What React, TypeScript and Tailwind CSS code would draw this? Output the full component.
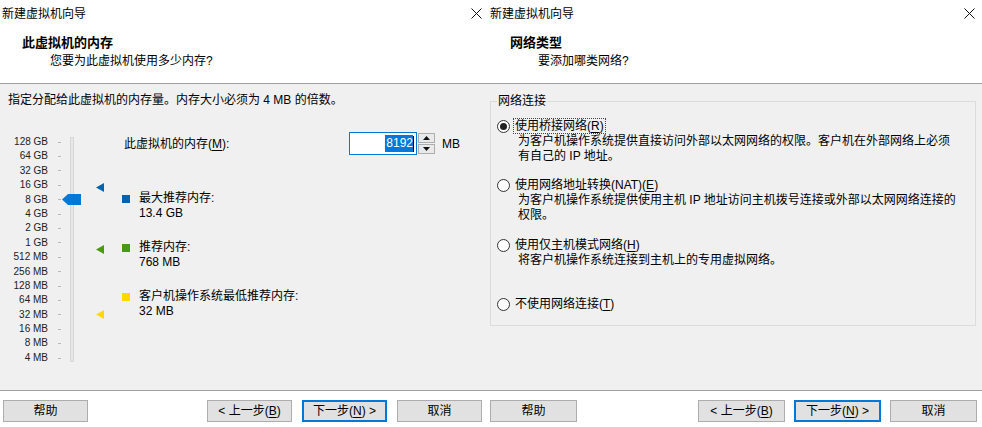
import React from 'react';

// slider stops, top to bottom
const STOPS = [
  '128 GB', '64 GB', '32 GB', '16 GB', '8 GB', '4 GB', '2 GB', '1 GB',
  '512 MB', '256 MB', '128 MB', '64 MB', '32 MB', '16 MB', '8 MB', '4 MB',
];

function Key({ c }: { c: string }) {
  return <span className="underline underline-offset-[2px]">{c}</span>;
}

function CloseIcon() {
  return (
    <svg width="11" height="11" viewBox="0 0 11 11">
      <path d="M0.5 0.5 L10.5 10.5 M10.5 0.5 L0.5 10.5" stroke="#111" strokeWidth="1" />
    </svg>
  );
}

function TitleBar({ pl, pr }: { pl: string; pr: string }) {
  return (
    <div className={`h-[27px] flex items-center justify-between bg-white ${pl} ${pr}`}>
      <span className="leading-4">新建虚拟机向导</span>
      <CloseIcon />
    </div>
  );
}

function Header({ title, sub, pl }: { title: string; sub: string; pl: string }) {
  return (
    <div className={`h-[57px] bg-white pt-[7px] border-b border-[#a0a0a0] ${pl}`}>
      <div className="text-[13px] font-bold leading-[18px]">{title}</div>
      <div className="mt-[1px] pl-[28px] leading-4">{sub}</div>
    </div>
  );
}

function Button({
  children,
  primary,
  w,
}: {
  children: React.ReactNode;
  primary?: boolean;
  w: string;
}) {
  return (
    <button
      className={`h-[22px] ${w} flex items-center justify-center bg-[#e1e1e1] leading-4 ${
        primary ? 'border-2 border-[#0078d7]' : 'border border-[#adadad]'
      }`}
    >
      {children}
    </button>
  );
}

function Footer({ w, gap, pt }: { w: string; gap: string; pt: string }) {
  return (
    <div className={`h-[37px] border-t border-[#a0a0a0] flex items-start pl-[3px] pr-[5px] ${pt}`}>
      <Button w={w}>帮助</Button>
      <div className="flex-1" />
      <div className={`flex ${gap}`}>
        <Button w={w}>
          &lt; 上一步(<Key c="B" />)
        </Button>
        <Button w={w} primary>
          下一步(<Key c="N" />) &gt;
        </Button>
        <Button w={w}>取消</Button>
      </div>
    </div>
  );
}

function Triangle({ color }: { color: string }) {
  return (
    <svg width="8" height="9" viewBox="0 0 8 9">
      <polygon points="0,4.5 8,0 8,9" fill={color} />
    </svg>
  );
}

function Legend({ color, label, value, mt }: { color: string; label: string; value: string; mt: string }) {
  return (
    <div className={`flex gap-[9px] ${mt}`}>
      <div className="w-[8px] h-[8px] mt-[3.5px]" style={{ background: color }} />
      <div className="leading-[15px]">
        <div>{label}</div>
        <div>{value}</div>
      </div>
    </div>
  );
}

function SpinButton({ up }: { up?: boolean }) {
  return (
    <div className="h-[10px] border border-[#adadad] bg-[#e9e9e9] flex items-center justify-center">
      <svg width="7" height="4" viewBox="0 0 7 4">
        <polygon points={up ? '0,4 3.5,0 7,4' : '0,0 3.5,4 7,0'} fill="#111" />
      </svg>
    </div>
  );
}

function MemoryPage() {
  return (
    <div className="w-[487px] h-[427px] flex flex-col">
      <TitleBar pl="pl-[2px]" pr="pr-[5px]" />
      <Header title="此虚拟机的内存" sub="您要为此虚拟机使用多少内存?" pl="pl-[22px]" />
      <div className="flex-1 bg-[#f0f0f0] pl-[8px] pt-[8px]">
        <p className="leading-4">指定分配给此虚拟机的内存量。内存大小必须为 4 MB 的倍数。</p>
        <div className="flex mt-[24px]">
          {/* scale labels */}
          <div className="w-[40px] pt-[3px] text-right text-[10px] text-[#222]">
            {STOPS.map((s) => (
              <div key={s} className="h-[14.4px] leading-[14.4px] whitespace-nowrap">
                {s}
              </div>
            ))}
          </div>
          {/* ticks */}
          <div className="ml-[10px] w-[3px] pt-[3px]">
            {STOPS.map((s) => (
              <div key={s} className="h-[14.4px] flex items-center">
                <div className="w-[3px] h-px bg-[#b8b8b8]" />
              </div>
            ))}
          </div>
          {/* track + thumb */}
          <div className="ml-[9px] mt-[5px] relative w-[4px] h-[225px] border border-[#d6d6d6] bg-[#e7e7e7]">
            <svg className="absolute left-[-9px] top-[56px]" width="19" height="11" viewBox="0 0 19 11">
              <polygon points="0,5.5 6,0 19,0 19,11 6,11" fill="#0078d7" />
            </svg>
          </div>
          {/* markers */}
          <div className="ml-[22px] w-[8px] flex flex-col">
            <div className="mt-[51px] h-[9px]">
              <Triangle color="#0063b1" />
            </div>
            <div className="mt-[53px] h-[9px]">
              <Triangle color="#4a9a0e" />
            </div>
            <div className="mt-[56px] h-[9px]">
              <Triangle color="#ffd800" />
            </div>
          </div>
          {/* info */}
          <div className="ml-[18px] flex flex-col">
            <div className="flex items-center h-[23px]">
              <div className="w-[227px] pl-[2px] leading-4">
                此虚拟机的内存(<Key c="M" />):
              </div>
              <div className="w-[68px] h-[23px] bg-white border border-[#0078d7] flex items-center justify-end pr-[2px]">
                <span className="bg-[#0078d7] text-white leading-[17px] pl-[1px]">8192</span>
                <span className="w-px h-[16px] bg-black" />
              </div>
              <div className="w-[18px] h-[23px] flex flex-col justify-center gap-px pl-px">
                <SpinButton up />
                <SpinButton />
              </div>
              <span className="ml-[7px] leading-4">MB</span>
            </div>
            <Legend color="#0063b1" label="最大推荐内存:" value="13.4 GB" mt="mt-[36px]" />
            <Legend color="#4a9a0e" label="推荐内存:" value="768 MB" mt="mt-[19px]" />
            <Legend color="#ffd800" label="客户机操作系统最低推荐内存:" value="32 MB" mt="mt-[19px]" />
          </div>
        </div>
      </div>
      <Footer w="w-[85px]" gap="gap-[10px]" pt="pt-[9px]" />
    </div>
  );
}

function Radio({ checked }: { checked?: boolean }) {
  return (
    <span className="w-[13px] h-[13px] shrink-0 rounded-full border border-[#333] bg-white flex items-center justify-center">
      {checked && <span className="w-[7px] h-[7px] rounded-full bg-[#222]" />}
    </span>
  );
}

function Option({
  checked,
  label,
  lines,
  mt,
}: {
  checked?: boolean;
  label: React.ReactNode;
  lines?: string[];
  mt: string;
}) {
  return (
    <div className={mt}>
      <div className="flex items-center h-[16px]">
        <Radio checked={checked} />
        <span
          className={`ml-[3px] px-px leading-[14px] border border-dotted ${
            checked ? 'border-[#444]' : 'border-transparent'
          }`}
        >
          {label}
        </span>
      </div>
      {lines && (
        <div className="pl-[21px] leading-[15px] whitespace-nowrap">
          {lines.map((l) => (
            <div key={l}>{l}</div>
          ))}
        </div>
      )}
    </div>
  );
}

function NetworkPage() {
  return (
    <div className="flex-1 h-[427px] flex flex-col">
      <TitleBar pl="pl-[3px]" pr="pr-[7px]" />
      <Header title="网络类型" sub="要添加哪类网络?" pl="pl-[23px]" />
      <div className="flex-1 bg-[#f0f0f0] pl-[3px] pr-[6px] pt-[9px]">
        <fieldset className="border border-[#dcdcdc] pl-[6px] pb-[13px]">
          <legend className="px-px leading-4">网络连接</legend>
          <Option
            checked
            mt="mt-[9px]"
            label={
              <>
                使用桥接网络(<Key c="R" />)
              </>
            }
            lines={[
              '为客户机操作系统提供直接访问外部以太网网络的权限。客户机在外部网络上必须',
              '有自己的 IP 地址。',
            ]}
          />
          <Option
            mt="mt-[13px]"
            label={
              <>
                使用网络地址转换(NAT)(<Key c="E" />)
              </>
            }
            lines={[
              '为客户机操作系统提供使用主机 IP 地址访问主机拨号连接或外部以太网网络连接的',
              '权限。',
            ]}
          />
          <Option
            mt="mt-[14px]"
            label={
              <>
                使用仅主机模式网络(<Key c="H" />)
              </>
            }
            lines={['将客户机操作系统连接到主机上的专用虚拟网络。']}
          />
          <Option
            mt="mt-[28px]"
            label={
              <>
                不使用网络连接(<Key c="T" />)
              </>
            }
          />
        </fieldset>
      </div>
      <Footer w="w-[87px]" gap="gap-[9px]" pt="pt-[9px]" />
    </div>
  );
}

export default function App() {
  return (
    <div className="w-[982px] h-[427px] flex overflow-hidden text-[12px] text-black font-['Liberation_Sans','Noto_Sans_CJK_SC',sans-serif]">
      <MemoryPage />
      <NetworkPage />
    </div>
  );
}
